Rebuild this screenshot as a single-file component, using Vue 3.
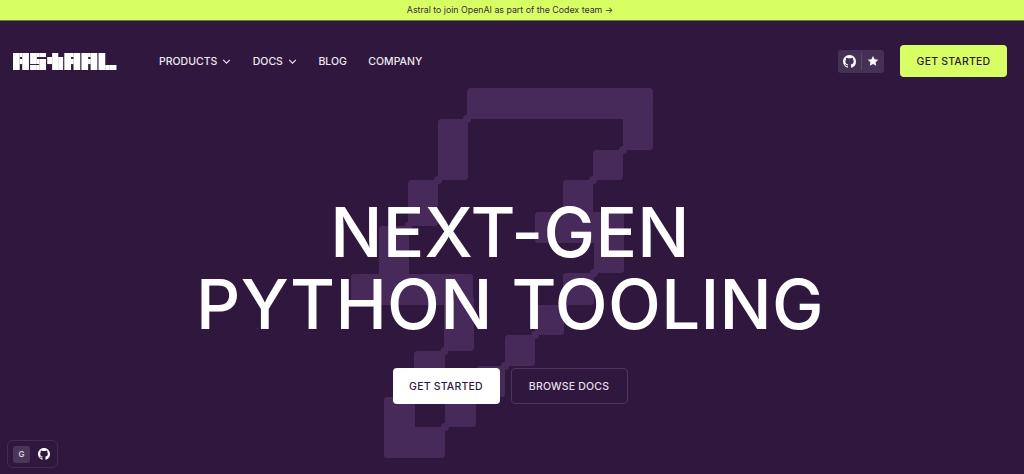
<template>
  <div class="page">
    <svg class="mark" viewBox="0 0 1024 474" aria-hidden="true">
      <rect
        v-for="(r, i) in markCells"
        :key="i"
        :x="r[0]"
        :y="r[1]"
        :width="r[2]"
        :height="r[3]"
        rx="3.5"
      />
      <circle
        v-for="(c, i) in markJoints"
        :key="'j' + i"
        :cx="c[0]"
        :cy="c[1]"
        r="4"
      />
    </svg>

    <div class="banner">Astral to join OpenAI as part of the Codex team →</div>

    <header class="nav">
      <div class="nav-left">
        <svg class="logo" viewBox="0 0 105 17" role="img" aria-label="Astral">
          <rect
            v-for="(p, i) in logoBlocks"
            :key="i"
            :x="p.x"
            :y="p.y"
            :width="p.w"
            :height="p.h"
          />
        </svg>
        <nav class="links">
          <a v-for="link in links" :key="link.label" class="link">
            {{ link.label }}
            <svg v-if="link.menu" class="chevron" viewBox="0 0 10 6">
              <path d="M1 1l4 4 4-4" />
            </svg>
          </a>
        </nav>
      </div>
      <div class="nav-right">
        <div class="repo">
          <svg class="icon" viewBox="0 0 16 16"><path :d="githubPath" /></svg>
          <span class="divider"></span>
          <svg class="icon star" viewBox="0 0 16 16">
            <path d="M8 1.2l2.1 4.4 4.8.6-3.5 3.3.9 4.8L8 12l-4.3 2.3.9-4.8L1.100 6.200l4.800-.6z" />
          </svg>
        </div>
        <button class="btn btn-lime">GET STARTED</button>
      </div>
    </header>

    <main class="hero">
      <h1>NEXT-GEN<br />PYTHON TOOLING</h1>
      <div class="actions">
        <button class="btn btn-white">GET STARTED</button>
        <button class="btn btn-ghost">BROWSE DOCS</button>
      </div>
    </main>

    <div class="widget">
      <span class="g">G</span>
      <svg class="icon" viewBox="0 0 16 16"><path :d="githubPath" /></svg>
    </div>
  </div>
</template>

<script setup>
const links = [
  { label: "PRODUCTS", menu: true },
  { label: "DOCS", menu: true },
  { label: "BLOG" },
  { label: "COMPANY" },
];

const githubPath =
  "M8 0C3.58 0 0 3.58 0 8c0 3.54 2.29 6.53 5.47 7.59.4.07.55-.17.55-.38 0-.19-.01-.82-.01-1.49-2.01.37-2.53-.49-2.69-.94-.09-.23-.48-.94-.82-1.13-.28-.15-.68-.52-.01-.53.63-.01 1.08.58 1.23.82.72 1.21 1.87.87 2.33.66.07-.52.28-.87.51-1.07-1.78-.2-3.64-.89-3.64-3.95 0-.87.31-1.59.82-2.15-.08-.2-.36-1.02.08-2.12 0 0 .67-.21 2.2.82.64-.18 1.32-.27 2-.27s1.36.09 2 .27c1.53-1.04 2.2-.82 2.2-.82.44 1.100.16 1.920.08 2.120.51.56.82 1.270.82 2.150 0 3.070-1.870 3.750-3.650 3.950.29.25.54.73.54 1.480 0 1.070-.01 1.930-.01 2.200 0 .21.15.46.55.38A8.010 8.010 0 0 0 16 8c0-4.420-3.580-8-8-8z";

// traced pieces of the background mark: x, y, width, height
const markCells = [
  [467, 88, 186, 31],
  [623, 110, 30, 40],
  [593, 150, 30, 30],
  [563, 180, 30, 63],
  [535, 212, 89, 31],
  [594, 212, 30, 61],
  [563, 273, 31, 32],
  [535, 305, 29, 30],
  [505, 335, 30, 31],
  [477, 366, 28, 31],
  [438, 119, 30, 61],
  [408, 180, 30, 46],
  [379, 226, 30, 56],
  [351, 274, 122, 31],
  [444, 296, 30, 55],
  [414, 351, 31, 50],
  [445, 397, 31, 30],
  [384, 397, 31, 61],
  [384, 427, 61, 31],
];

// the steps only touch at their corners, these fill the gap there
const markJoints = [
  [467, 119],
  [438, 180],
  [408.500, 226],
  [623, 150],
  [593, 180],
  [594, 273],
  [563.500, 305],
  [535, 335],
  [505, 366],
  [476.500, 397],
  [445, 427],
  [444.500, 351],
  [414.500, 397],
];

// wordmark: 5 rows of 3 columns, thin slits between the heavy rows
const rowTops = [0, 4, 6, 11, 12];
const rowHeights = [4, 2, 5, 1, 5];
const glyphs = {
  A: ["###", "#.#", "###", "#.#", "#.#"],
  S: ["###", "#..", "###", "..#", "###"],
  T: [".#.", "###", "###", ".##", ".##"],
  R: ["###", "#.#", "###", "#.#", "#.#"],
  L: ["#..", "#..", "#..", "#..", "###"],
};

const logoBlocks = [];
let cursor = 0;
for (const letter of "ASTRAL") {
  const side = letter === "T" ? 5 : 6.75;
  const middle = letter === "L" ? 4.5 : letter === "T" ? 6 : 2.5;
  const colLefts = [0, side - 0.05, side + middle - 0.05];
  const colWidths = [side, middle + 0.1, side];
  glyphs[letter].forEach((row, y) => {
    [...row].forEach((c, x) => {
      if (c === "#") {
        logoBlocks.push({
          x: cursor + colLefts[x],
          y: rowTops[y],
          w: colWidths[x],
          h: rowHeights[y] + 0.05,
        });
      }
    });
  });
  cursor += side * 2 + middle + 1.1;
}
</script>

<style scoped>
.page {
  position: relative;
  height: 474px;
  overflow: hidden;
  background: #30173d;
  color: #fff;
  font-family: Inter, "Liberation Sans", sans-serif;
}

.mark {
  position: absolute;
  inset: 0;
  width: 1024px;
  height: 474px;
  fill: #482a5a;
}

.banner {
  position: relative;
  height: 20px;
  padding-right: 4px;
  background: #d7ff64;
  border-bottom: 1px solid #6d7a45;
  color: #3a2b42;
  font-size: 8.8px;
  line-height: 20px;
  text-align: center;
}

.nav {
  position: relative;
  display: flex;
  justify-content: space-between;
  align-items: center;
  height: 80px;
  padding: 0 17px 0 13px;
}

.nav-left,
.nav-right,
.links,
.actions,
.repo,
.widget {
  display: flex;
  align-items: center;
}

.logo {
  width: 105px;
  height: 17px;
  fill: #fff;
}

.links {
  gap: 21.5px;
  margin-left: 41px;
}

.link {
  display: flex;
  align-items: center;
  gap: 5px;
  font-size: 10.500px;
  font-weight: 500;
  color: #eee7f0;
}

.chevron {
  width: 9px;
  height: 5px;
  fill: none;
  stroke: #eee7f0;
  stroke-width: 1.3;
}

.nav-right {
  gap: 16px;
}

.repo {
  gap: 5px;
  height: 23px;
  padding: 0 5px;
  background: #463055;
  border-radius: 3px;
}

.icon {
  width: 13px;
  height: 13px;
  fill: #fff;
}

.star {
  width: 12px;
  height: 12px;
}

.divider {
  width: 1px;
  height: 17px;
  background: #5c4869;
}

.btn {
  height: 32px;
  padding: 0;
  border: 1px solid transparent;
  border-radius: 4px;
  font-family: inherit;
  font-size: 10.500px;
  font-weight: 500;
  letter-spacing: 0.2px;
}

.btn-lime {
  width: 107px;
  background: #d7ff64;
  color: #30173d;
}

.hero {
  position: relative;
  display: flex;
  flex-direction: column;
  align-items: center;
  padding: 95px 4px 0 0;
}

h1 {
  margin: 0;
  font-size: 69px;
  font-weight: 500;
  line-height: 72px;
  letter-spacing: 0.3px;
  text-align: center;
}

.actions {
  gap: 11px;
  margin-top: 28px;
}

.actions .btn {
  height: 36px;
}

.btn-white {
  width: 107px;
  background: #fff;
  color: #30173d;
}

.btn-ghost {
  width: 117px;
  background: #30173d;
  border-color: #4d3560;
  color: #e5dde9;
}

.widget {
  position: absolute;
  left: 7px;
  bottom: 6px;
  gap: 8px;
  box-sizing: border-box;
  height: 28px;
  padding: 0 7px 0 5px;
  border: 1px solid #432b52;
  border-radius: 6px;
}

.widget .icon {
  width: 12px;
  height: 12px;
}

.g {
  width: 17px;
  height: 17px;
  background: #4b3559;
  border-radius: 3px;
  font-size: 8px;
  font-weight: 600;
  line-height: 17px;
  text-align: center;
  color: #d8d0dd;
}
</style>
